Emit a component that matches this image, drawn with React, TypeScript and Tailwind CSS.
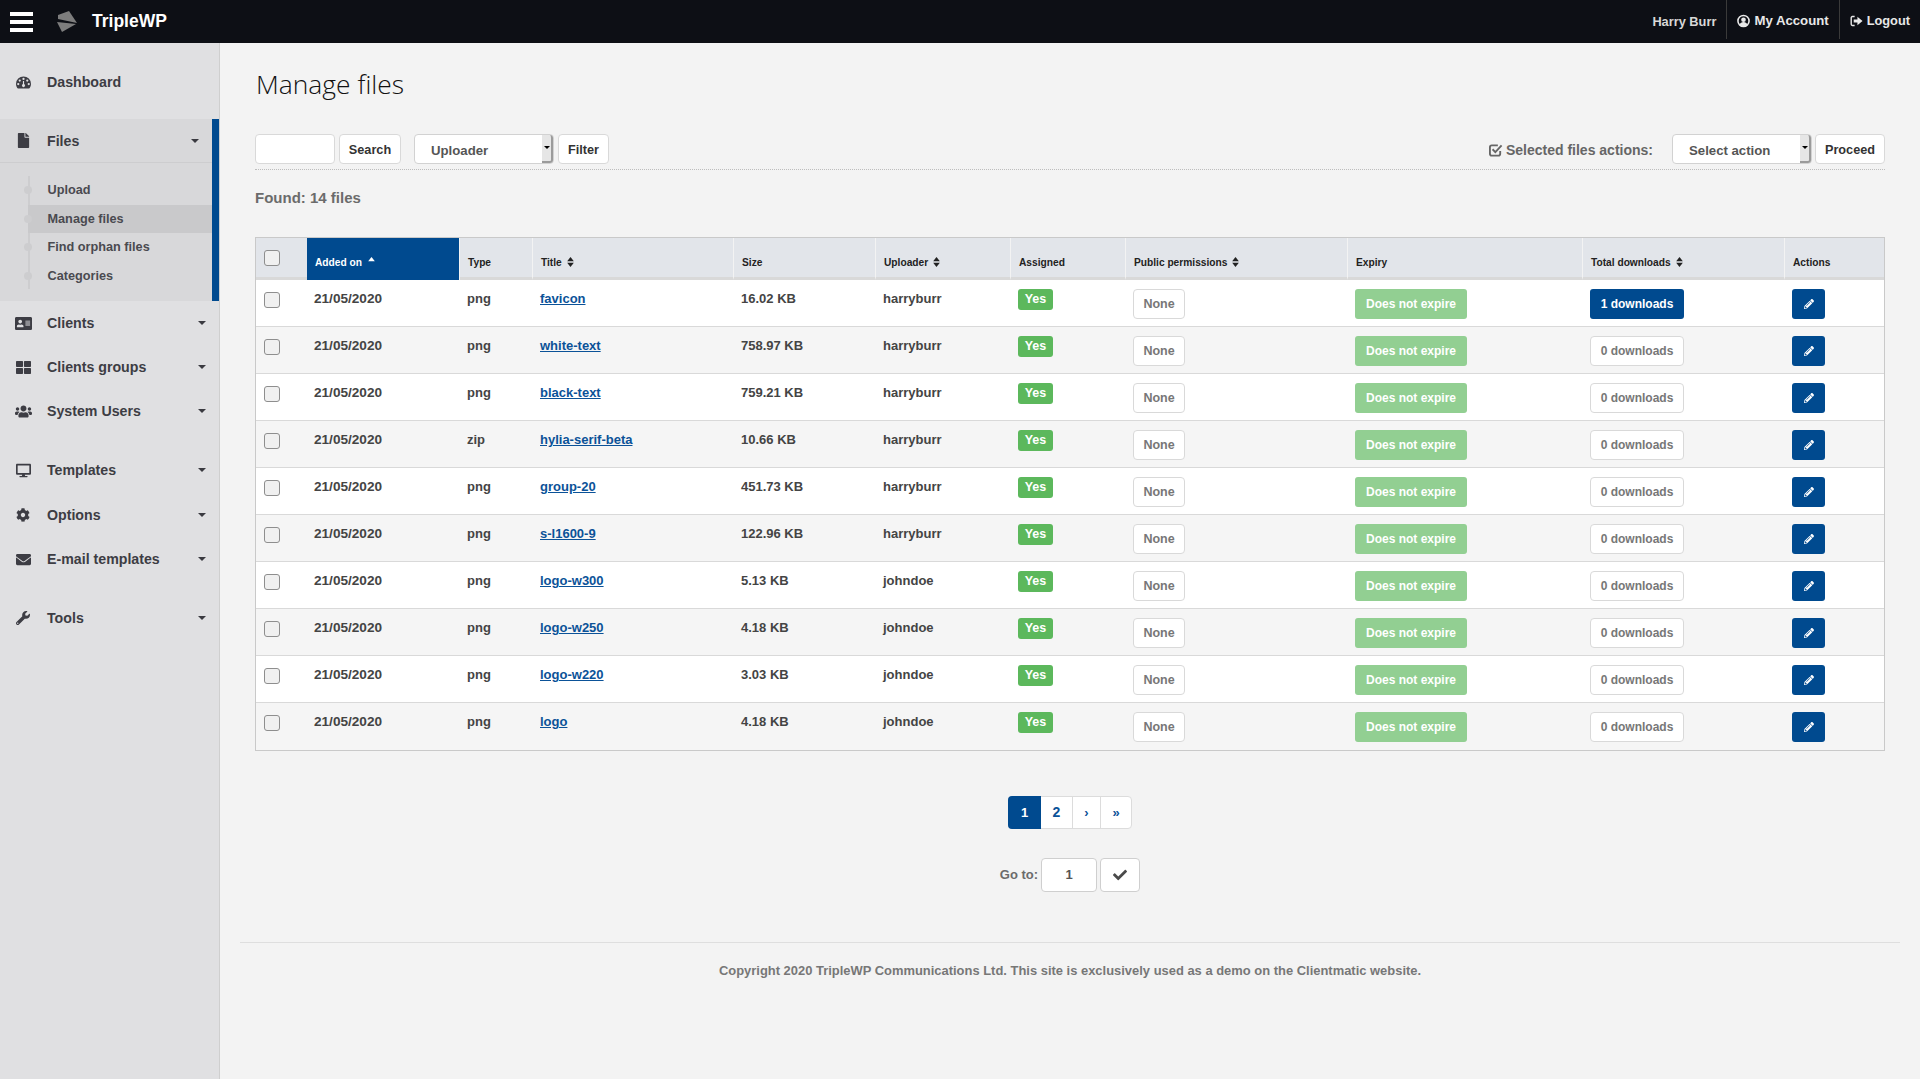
import React from 'react';
import {
  FaFile,
  FaAddressCard,
  FaThLarge,
  FaUsers,
  FaDesktop,
  FaCog,
  FaEnvelope,
  FaWrench,
  FaPencilAlt,
  FaCheck,
} from 'react-icons/fa';

const rows = [
  ['png', 'favicon', '16.02 KB', 'harryburr', '1 downloads'],
  ['png', 'white-text', '758.97 KB', 'harryburr', '0 downloads'],
  ['png', 'black-text', '759.21 KB', 'harryburr', '0 downloads'],
  ['zip', 'hylia-serif-beta', '10.66 KB', 'harryburr', '0 downloads'],
  ['png', 'group-20', '451.73 KB', 'harryburr', '0 downloads'],
  ['png', 's-l1600-9', '122.96 KB', 'harryburr', '0 downloads'],
  ['png', 'logo-w300', '5.13 KB', 'johndoe', '0 downloads'],
  ['png', 'logo-w250', '4.18 KB', 'johndoe', '0 downloads'],
  ['png', 'logo-w220', '3.03 KB', 'johndoe', '0 downloads'],
  ['png', 'logo', '4.18 KB', 'johndoe', '0 downloads'],
];

const Caret = ({ className = '' }: { className?: string }) => (
  <span className={`w-0 h-0 border-x-[4px] border-x-transparent border-t-[4px] border-t-[#3a3a40] ${className}`} />
);

const Sort = ({ up }: { up?: boolean }) => (
  <svg viewBox="0 0 8 12" className={`inline-block w-[7px] h-[10px] align-[-1px] ${up ? 'ml-[3px]' : 'ml-[5px]'}`} fill="currentColor">
    <path d="M4 0 8 5H0z" />
    {!up && <path d="M4 12 0 7h8z" />}
  </svg>
);

const Checkbox = () => (
  <span className="block w-4 h-4 rounded-[3px] border border-[#8e8e8e] bg-[#f0f0f0]" />
);

const DashboardIcon = () => (
  <svg viewBox="0 0 16 13" className="w-[15px] h-[13px]" fill="currentColor" fillRule="evenodd">
    <path d="M8 0a8 8 0 0 1 8 8c0 2-.8 3.7-2 5H2C.8 11.7 0 10 0 8a8 8 0 0 1 8-8zM8 1.5a1.2 1.2 0 1 0 0 2.4 1.2 1.2 0 0 0 0-2.4zM4 3.2a1.2 1.2 0 1 0 0 2.4 1.2 1.2 0 0 0 0-2.4zM12 3.2a1.2 1.2 0 1 0 0 2.4 1.2 1.2 0 0 0 0-2.4zM2.4 7a1.2 1.2 0 1 0 0 2.4 1.2 1.2 0 0 0 0-2.4zM13.6 7a1.2 1.2 0 1 0 0 2.4 1.2 1.2 0 0 0 0-2.4zM7.4 5v3.2a1.6 1.6 0 1 0 1.2 0V5z" />
  </svg>
);

const AccountIcon = () => (
  <svg viewBox="0 0 14 14" className="w-[13px] h-[14px] shrink-0">
    <circle cx="7" cy="7" r="6" fill="none" stroke="currentColor" strokeWidth="1.7" />
    <circle cx="7" cy="5.6" r="2.5" fill="currentColor" />
    <path d="M2.8 11c.6-2 2.2-3 4.2-3s3.600 1 4.200 3a6 6 0 0 1-8.400 0z" fill="currentColor" />
  </svg>
);

const LogoutIcon = () => (
  <svg viewBox="0 0 14 12" className="w-[13px] h-[12px] shrink-0">
    <path d="M5 1.2H2.500a1.200 1.200 0 0 0-1.200 1.200v7.200a1.200 1.200 0 0 0 1.200 1.200H5" fill="none" stroke="currentColor" strokeWidth="1.500" />
    <path d="M4 4.500h4V1.500L13.500 6 8 10.500v-3H4z" fill="currentColor" />
  </svg>
);

const CheckSquareIcon = () => (
  <svg viewBox="0 0 15 14" className="w-[14px] h-[14px] shrink-0" fill="none" stroke="currentColor" strokeWidth="2">
    <path d="M12 8v3a2 2 0 0 1-2 2H3a2 2 0 0 1-2-2V4a2 2 0 0 1 2-2h6.500" />
    <path d="M3.800 6.200 6.800 9.200 13.500 2" />
  </svg>
);

const NavLabel = ({ children }: { children: React.ReactNode }) => (
  <span className="pt-[2px] text-[14.2px] font-bold text-[#3d3d44]">{children}</span>
);

const NavItem = ({ icon, label, className = '' }: { icon: React.ReactNode; label: string; className?: string }) => (
  <div className={`h-11 flex items-center relative ${className}`}>
    <span className="w-[47px] flex justify-center pr-[1px] shrink-0 text-[#3d3d44] text-[15px]">{icon}</span>
    <NavLabel>{label}</NavLabel>
    <Caret className="absolute left-[198px] top-[20px]" />
  </div>
);

const Select = ({ label, width }: { label: string; width: string }) => (
  <div className={`${width} h-[30px] rounded-[4px] border border-[#d2d2d2] bg-white flex items-stretch text-[13.200px] font-bold text-[#555]`}>
    <span className="flex-1 pl-4 pt-[3px] flex items-center">{label}</span>
    <span className="w-[11px] bg-[#e6e6e6] border-r-2 border-b-2 border-[#9b9b9b] rounded-r-[3px] flex items-center justify-center pb-[2px]">
      <span className="w-0 h-0 border-x-[3px] border-x-transparent border-t-[3px] border-t-black" />
    </span>
  </div>
);

const Btn = ({ children, className = '' }: { children: React.ReactNode; className?: string }) => (
  <span className={`h-[30px] rounded-[4px] border border-[#d9d9d9] flex items-center justify-center font-bold ${className}`}>
    {children}
  </span>
);

export default function App() {
  return (
    <div className="min-h-screen flex flex-col bg-[#f3f3f3] font-['Liberation_Sans',Arial,sans-serif]">
      <header className="h-[43px] bg-[#0d0f15] flex items-center shrink-0 text-[#e8e8e8]">
        <div className="ml-[10px] w-[23px] flex flex-col gap-[4px]">
          <span className="h-1 bg-white" />
          <span className="h-1 bg-white" />
          <span className="h-1 bg-white" />
        </div>
        <svg viewBox="0 0 20 22" className="ml-[24px] w-5 h-[22px]">
          <path d="M1 4 12 0 20 12 1 8z" fill="#7d7d7d" />
          <path d="M0 11 19 13 5 21z" fill="#7d7d7d" />
        </svg>
        <span className="ml-[15px] text-[17.500px] font-bold text-white">TripleWP</span>
        <div className="ml-auto h-full flex text-[13.200px] font-bold">
          <span className="flex items-center pr-[10px] text-[12.800px] text-[#d8d8d8]">Harry Burr</span>
          <span className="flex items-center gap-[4px] h-[39px] border-l border-[#3a3a3a] pl-[10px] pr-[10px] pt-[3px]">
            <AccountIcon /> My Account
          </span>
          <span className="flex items-center gap-[4px] h-[39px] border-l border-[#3a3a3a] pl-[10px] pr-[10px] pt-[3px] text-[12.800px]">
            <LogoutIcon /> Logout
          </span>
        </div>
      </header>

      <div className="flex-1 flex">
        <aside className="w-[220px] shrink-0 bg-[#e0e0e2] border-r border-[#cfcfcf] pt-[17px]">
          <div className="h-11 flex items-center">
            <span className="w-[47px] flex justify-center pr-[1px] text-[#3d3d44] text-[15px]"><DashboardIcon /></span>
            <NavLabel>Dashboard</NavLabel>
          </div>
          <div className="mt-[15px] bg-[#d8d8da] border-r-[7px] border-[#004a8f] h-[182px]">
            <div className="h-11 flex items-center relative border-b border-[#cdcdcf]">
              <span className="w-[47px] flex justify-center pr-[1px] text-[#3d3d44] text-[15px]"><FaFile /></span>
              <NavLabel>Files</NavLabel>
              <Caret className="absolute left-[191px] top-[20px]" />
            </div>
            <div className="relative pt-[13px] text-[12.700px] font-bold text-[#4a4a50]">
              <span className="absolute left-[28px] top-[13px] w-[2px] h-[113px] bg-[#cdcdcf]" />
              {['Upload', 'Manage files', 'Find orphan files', 'Categories'].map((s, i) => (
                <div key={s} className={`relative h-[28.500px] ml-[28px] pl-[19.500px] pt-[1px] flex items-center ${i === 1 ? 'bg-[#c9c9cb]' : ''}`}>
                  <span className="absolute -left-[4px] top-[10px] w-2 h-2 rounded-full bg-[#cdcdcf]" />
                  {s}
                </div>
              ))}
            </div>
          </div>
          <NavItem icon={<FaAddressCard className="text-[17px]" />} label="Clients" />
          <NavItem icon={<FaThLarge />} label="Clients groups" />
          <NavItem icon={<FaUsers className="text-[17px]" />} label="System Users" />
          <div className="h-[15px]" />
          <NavItem icon={<FaDesktop />} label="Templates" />
          <NavItem icon={<FaCog className="text-[14px]" />} label="Options" className="mt-[1px]" />
          <NavItem icon={<FaEnvelope />} label="E-mail templates" />
          <div className="h-[15px]" />
          <NavItem icon={<FaWrench className="text-[14px]" />} label="Tools" />
        </aside>

        <main className="flex-1 min-w-0 px-5">
          <div className="px-[15px]">
            <h1 className="h-[91px] pt-[22px] pl-[1px] text-[26.400px] leading-[38px] font-light text-[#111] font-['Open_Sans',sans-serif]">Manage files</h1>

            <div className="flex items-center pb-[5px] border-b border-dotted border-[#bdbdbd] h-[36px] text-[#333] text-[12.700px]">
              <span className="w-[80px] h-[30px] rounded-[4px] border border-[#d9d9d9] bg-white" />
              <Btn className="ml-[4px] w-[62px] bg-white pt-[3px]">Search</Btn>
              <div className="ml-[13px]"><Select label="Uploader" width="w-[140px]" /></div>
              <Btn className="ml-[4px] w-[51px] bg-white pt-[3px]">Filter</Btn>
              <span className="ml-auto flex items-center gap-[3px] pt-[2px] text-[14px] font-bold text-[#666]">
                <CheckSquareIcon /> Selected files actions:
              </span>
              <div className="ml-[19px]"><Select label="Select action" width="w-[140px]" /></div>
              <Btn className="ml-[3px] w-[70px] bg-white pt-[3px]">Proceed</Btn>
            </div>

            <p className="mt-[18px] text-[15px] leading-[20px] font-bold text-[#6b6b6b]">Found: 14 files</p>

            <table className="mt-[29px] w-full table-fixed border-separate border-spacing-0 border border-[#c9c9c9] text-[13px] font-bold text-[#444]">
              <colgroup>
                {[51, 153, 73, 201, 142, 135, 115, 222, 235, 202, 99].map((w, i) => (
                  <col key={i} style={{ width: w }} />
                ))}
              </colgroup>
              <thead>
                <tr className="h-[42px] text-left text-[10.200px] text-[#222] bg-[#e2e5ea] align-bottom">
                  <th className="border-b-[3px] border-[#d9d9d9] pl-2 pb-[6px]"><span className="block pb-[5px]"><Checkbox /></span></th>
                  <th className="bg-[#004a8f] text-white pl-2 pb-[10px] font-bold border-r border-[#f3f3f3]">Added on <Sort up /></th>
                  {['Type', 'Title', 'Size', 'Uploader', 'Assigned', 'Public permissions', 'Expiry', 'Total downloads', 'Actions'].map((h, i) => (
                    <th key={h} className={`border-b-[3px] border-[#d9d9d9] pl-2 pb-[7px] font-bold ${i < 8 ? 'border-r-[#f3f3f3] border-r' : ''}`}>
                      {h}
                      {['Title', 'Uploader', 'Public permissions', 'Total downloads'].includes(h) && <Sort />}
                    </th>
                  ))}
                </tr>
              </thead>
              <tbody>
                {rows.map((r, i) => (
                  <tr key={r[1]} className={`h-[47px] align-top ${i % 2 ? 'bg-[#f5f5f5]' : 'bg-white'}`}>
                    <td className={`pl-2 pt-3 ${i < 9 ? 'border-b border-[#d9d9d9]' : ''}`}><Checkbox /></td>
                    <td className={`pl-[7px] pt-[11px] leading-4 text-[13.600px] ${i < 9 ? 'border-b border-[#d9d9d9]' : ''}`}>21/05/2020</td>
                    <td className={`pl-[7px] pt-[11px] leading-4 ${i < 9 ? 'border-b border-[#d9d9d9]' : ''}`}>{r[0]}</td>
                    <td className={`pl-[7px] pt-[11px] leading-4 ${i < 9 ? 'border-b border-[#d9d9d9]' : ''}`}>
                      <a href="#" className="underline text-[#0b5298]">{r[1]}</a>
                    </td>
                    <td className={`pl-[7px] pt-[11px] leading-4 ${i < 9 ? 'border-b border-[#d9d9d9]' : ''}`}>{r[2]}</td>
                    <td className={`pl-[7px] pt-[11px] leading-4 ${i < 9 ? 'border-b border-[#d9d9d9]' : ''}`}>{r[3]}</td>
                    <td className={`pl-[7px] pt-[9px] ${i < 9 ? 'border-b border-[#d9d9d9]' : ''}`}>
                      <span className="inline-flex items-center justify-center w-[35px] h-[21px] rounded-[3px] bg-[#5cb85c] text-white text-[12.500px]">Yes</span>
                    </td>
                    <td className={`pl-[7px] pt-[9px] ${i < 9 ? 'border-b border-[#d9d9d9]' : ''}`}>
                      <Btn className="w-[52px] bg-white text-[#777] text-[12.500px]">None</Btn>
                    </td>
                    <td className={`pl-[7px] pt-[9px] ${i < 9 ? 'border-b border-[#d9d9d9]' : ''}`}>
                      <span className="flex items-center justify-center w-[112px] h-[30px] rounded-[3px] bg-[#92cf92] text-white text-[12px]">Does not expire</span>
                    </td>
                    <td className={`pl-[7px] pt-[9px] ${i < 9 ? 'border-b border-[#d9d9d9]' : ''}`}>
                      {i === 0 ? (
                        <span className="flex items-center justify-center w-[94px] h-[30px] rounded-[3px] bg-[#004a8f] text-white text-[12px]">{r[4]}</span>
                      ) : (
                        <Btn className="w-[94px] bg-white text-[#777] text-[12px]">{r[4]}</Btn>
                      )}
                    </td>
                    <td className={`pl-[7px] pt-[9px] ${i < 9 ? 'border-b border-[#d9d9d9]' : ''}`}>
                      <span className="flex items-center justify-center w-[33px] h-[30px] rounded-[3px] bg-[#004a8f] text-white text-[10px]"><FaPencilAlt /></span>
                    </td>
                  </tr>
                ))}
              </tbody>
            </table>

            <div className="mt-[45px] flex justify-center">
              <div className="flex h-[33px] rounded-[4px] border border-[#dcdcdc] bg-white text-[#0b5298] font-bold text-[13px]">
                <span className="w-[33px] -my-[1px] -ml-[1px] bg-[#004a8f] text-white rounded-l-[4px] flex items-center justify-center">1</span>
                <span className="w-[31px] flex items-center justify-center text-[14px]">2</span>
                <span className="w-[28px] flex items-center justify-center border-l border-[#dcdcdc]">›</span>
                <span className="w-[31px] flex items-center justify-center border-l border-[#dcdcdc]">»</span>
              </div>
            </div>

            <div className="mt-[29px] flex justify-center items-center font-bold text-[#6b6b6b] text-[13px]">
              <span className="mr-[3px]">Go to:</span>
              <span className="w-[56px] h-[34px] rounded-[4px] border border-[#cfcfcf] bg-white flex items-center justify-center text-[#555]">1</span>
              <span className="ml-[3px] w-[40px] h-[34px] rounded-[4px] border border-[#cfcfcf] bg-white flex items-center justify-center text-[#4a4a4a] text-[14px]"><FaCheck /></span>
            </div>
          </div>

          <footer className="mt-[50px] border-t border-[#dedede] pt-[20px] text-center text-[12.950px] leading-[16px] font-bold text-[#777]">
            Copyright 2020 TripleWP Communications Ltd. This site is exclusively used as a demo on the Clientmatic website.
          </footer>
        </main>
      </div>
    </div>
  );
}
